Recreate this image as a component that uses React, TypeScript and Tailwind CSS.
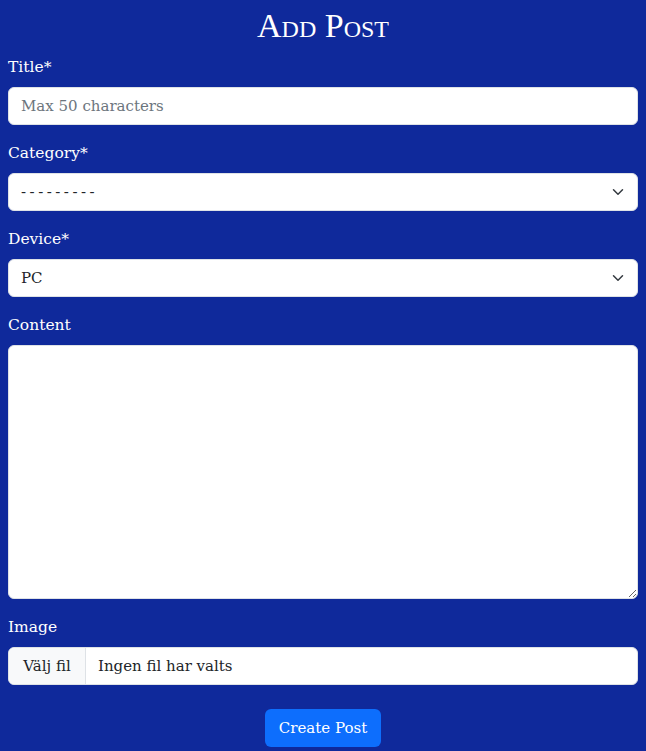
import React from 'react';

const serif = { fontFamily: '"DejaVu Serif", "Liberation Serif", serif' };

function Chevron() {
    return (
        <svg width="16" height="12" viewBox="0 0 16 16" className="absolute right-3 top-1/2 -translate-y-1/2 pointer-events-none">
            <path d="M2 5l6 6 6-6" fill="none" stroke="#343a40" strokeWidth="2" strokeLinecap="round" strokeLinejoin="round" />
        </svg>
    );
}

function Field({ label, children }: { label: string; children: React.ReactNode }) {
    return (
        <div className="mb-4">
            <label className="block mb-2 text-[15.5px] leading-6 text-white">{label}</label>
            {children}
        </div>
    );
}

export default function App() {
    return (
        <div className="min-h-[751px] bg-[#0f299b] px-2" style={serif}>
            <h1 className="text-center text-white text-[34px] leading-[52px] h-[55px]" style={{ fontVariant: 'small-caps', fontFamily: '"Liberation Serif", serif' }}>
                Add Post
            </h1>
            <form className="text-[15px]">
                <Field label="Title*">
                    <input
                        type="text"
                        placeholder="Max 50 characters"
                        className="block w-full h-[38px] px-3 bg-white rounded-md border border-[#dee2e6] text-[#212529] placeholder:text-[#6c757d] outline-none"
                    />
                </Field>
                <Field label="Category*">
                    <div className="relative">
                        <select className="block w-full h-[38px] pl-3 pr-9 bg-white rounded-md border border-[#dee2e6] text-[#212529] tracking-[3.5px] appearance-none outline-none">
                            <option>---------</option>
                        </select>
                        <Chevron />
                    </div>
                </Field>
                <Field label="Device*">
                    <div className="relative">
                        <select className="block w-full h-[38px] pl-3 pr-9 bg-white rounded-md border border-[#dee2e6] text-[#212529] appearance-none outline-none">
                            <option>PC</option>
                        </select>
                        <Chevron />
                    </div>
                </Field>
                <Field label="Content">
                    <textarea className="block w-full h-[254px] px-3 py-1.5 bg-white rounded-md border border-[#dee2e6] text-[#212529] outline-none" />
                </Field>
                <Field label="Image">
                    <div className="flex h-[38px] w-full bg-white rounded-md border border-[#dee2e6] overflow-hidden text-[#212529]">
                        <span className="flex items-center justify-center w-[77px] bg-[#f8f9fa] border-r border-[#dee2e6]">Välj fil</span>
                        <span className="flex items-center px-3">Ingen fil har valts</span>
                    </div>
                </Field>
                <div className="flex justify-center pt-2">
                    <button type="button" className="h-[38px] px-3.5 rounded-md bg-[#0d6efd] text-white">
                        Create Post
                    </button>
                </div>
            </form>
        </div>
    );
}
